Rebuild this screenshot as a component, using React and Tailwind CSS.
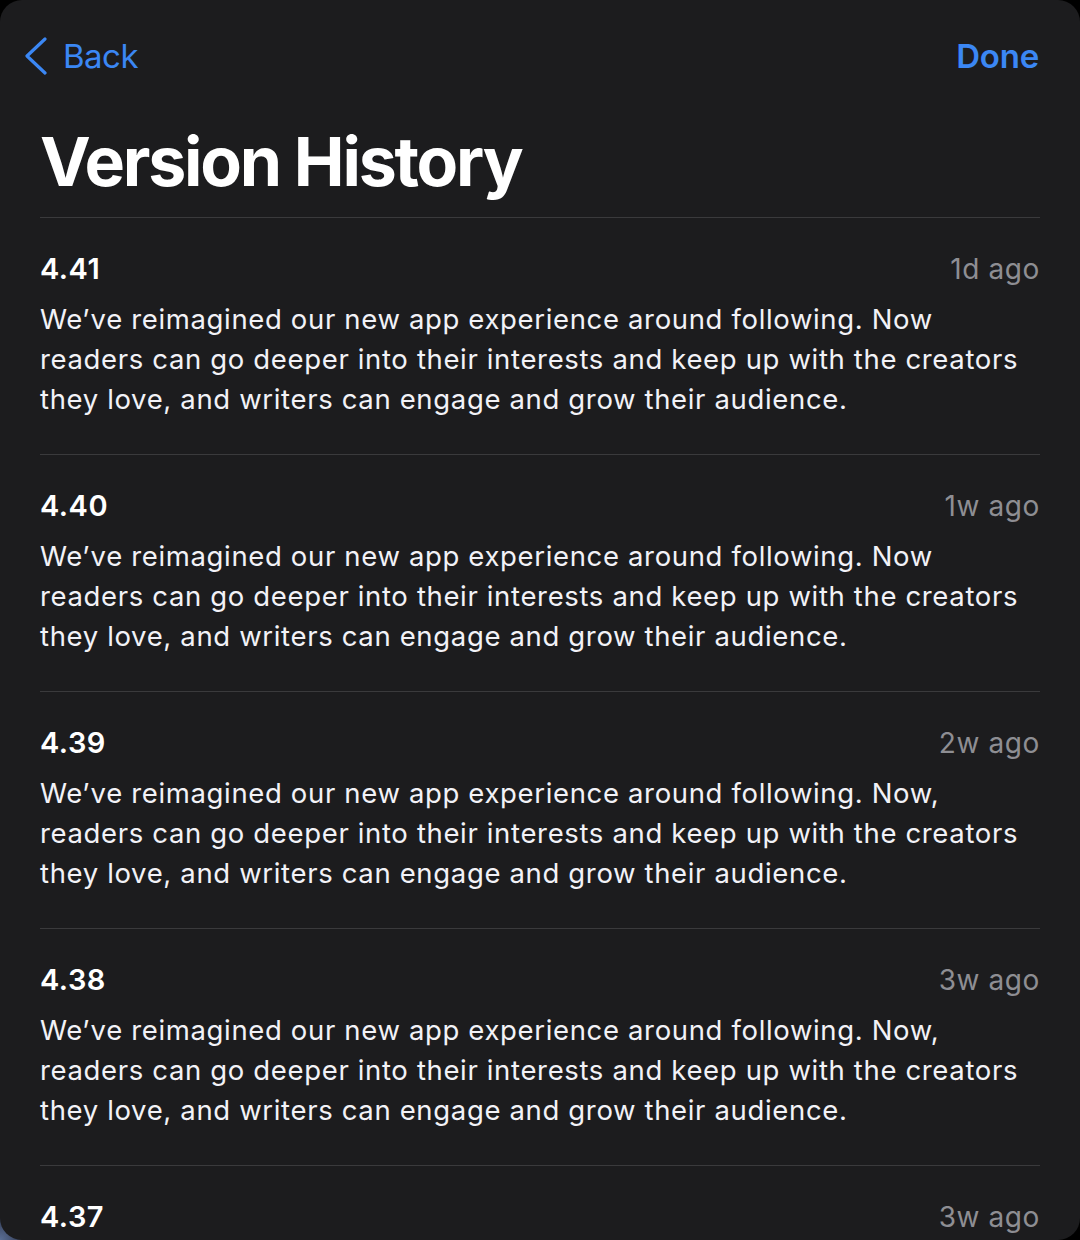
const versions = [
  { id: '4.41', ago: '1d ago', notes: 'We’ve reimagined our new app experience around following. Now readers can go deeper into their interests and keep up with the creators they love, and writers can engage and grow their audience.' },
  { id: '4.40', ago: '1w ago', notes: 'We’ve reimagined our new app experience around following. Now readers can go deeper into their interests and keep up with the creators they love, and writers can engage and grow their audience.' },
  { id: '4.39', ago: '2w ago', notes: 'We’ve reimagined our new app experience around following. Now, readers can go deeper into their interests and keep up with the creators they love, and writers can engage and grow their audience.' },
  { id: '4.38', ago: '3w ago', notes: 'We’ve reimagined our new app experience around following. Now, readers can go deeper into their interests and keep up with the creators they love, and writers can engage and grow their audience.' },
  { id: '4.37', ago: '3w ago', notes: 'We’ve reimagined our new app experience around following. Now, readers can go deeper into their interests and keep up with the creators they love, and writers can engage and grow their audience.' },
]

export default function App() {
  return (
    <div className="w-[1080px] h-[1240px] bg-[radial-gradient(circle_at_0%_100%,#5b6f96_0px,#3a4560_18px,#000_40px)] font-['Inter',sans-serif]">
      <div className="h-full w-full bg-[#1c1c1e] rounded-[22px] overflow-hidden">
        {/* nav */}
        <div className="flex items-center justify-between h-[76px] pt-[36px] pl-[24px] pr-[41px]">
          <button className="flex items-center gap-[15px] text-[#3b87f4]">
            <svg width="24" height="38" viewBox="0 0 24 38" fill="none" stroke="currentColor" strokeWidth={3.2} strokeLinecap="round" strokeLinejoin="round">
              <path d="M21 2 L3 19 L21 36" />
            </svg>
            <span className="text-[33px] leading-none tracking-[-0.5px]">Back</span>
          </button>
          <button className="text-[33px] leading-none font-semibold text-[#3b87f4] tracking-[-0.2px]">Done</button>
        </div>

        <div className="px-[40px]">
          <h1 className="mt-[45px] text-[68px] leading-[80px] font-bold text-white tracking-[-2.2px]">Version History</h1>

          <div className="mt-[16px] border-t border-[#3a3a3c]">
            {versions.map(v => (
              <div key={v.id} className="pt-[31px] pb-[35px] border-b border-[#3a3a3c]">
                <div className="flex items-center justify-between h-[40px]">
                  <span className="text-[29px] font-semibold text-white tracking-[0.5px]">{v.id}</span>
                  <span className="text-[28px] text-[#8e8e93] tracking-[0.6px]">{v.ago}</span>
                </div>
                <p className="mt-[10px] text-[27.5px] leading-[40px] text-[#f2f2f7] tracking-[0.65px]">{v.notes}</p>
              </div>
            ))}
          </div>
        </div>
      </div>
    </div>
  )
}
